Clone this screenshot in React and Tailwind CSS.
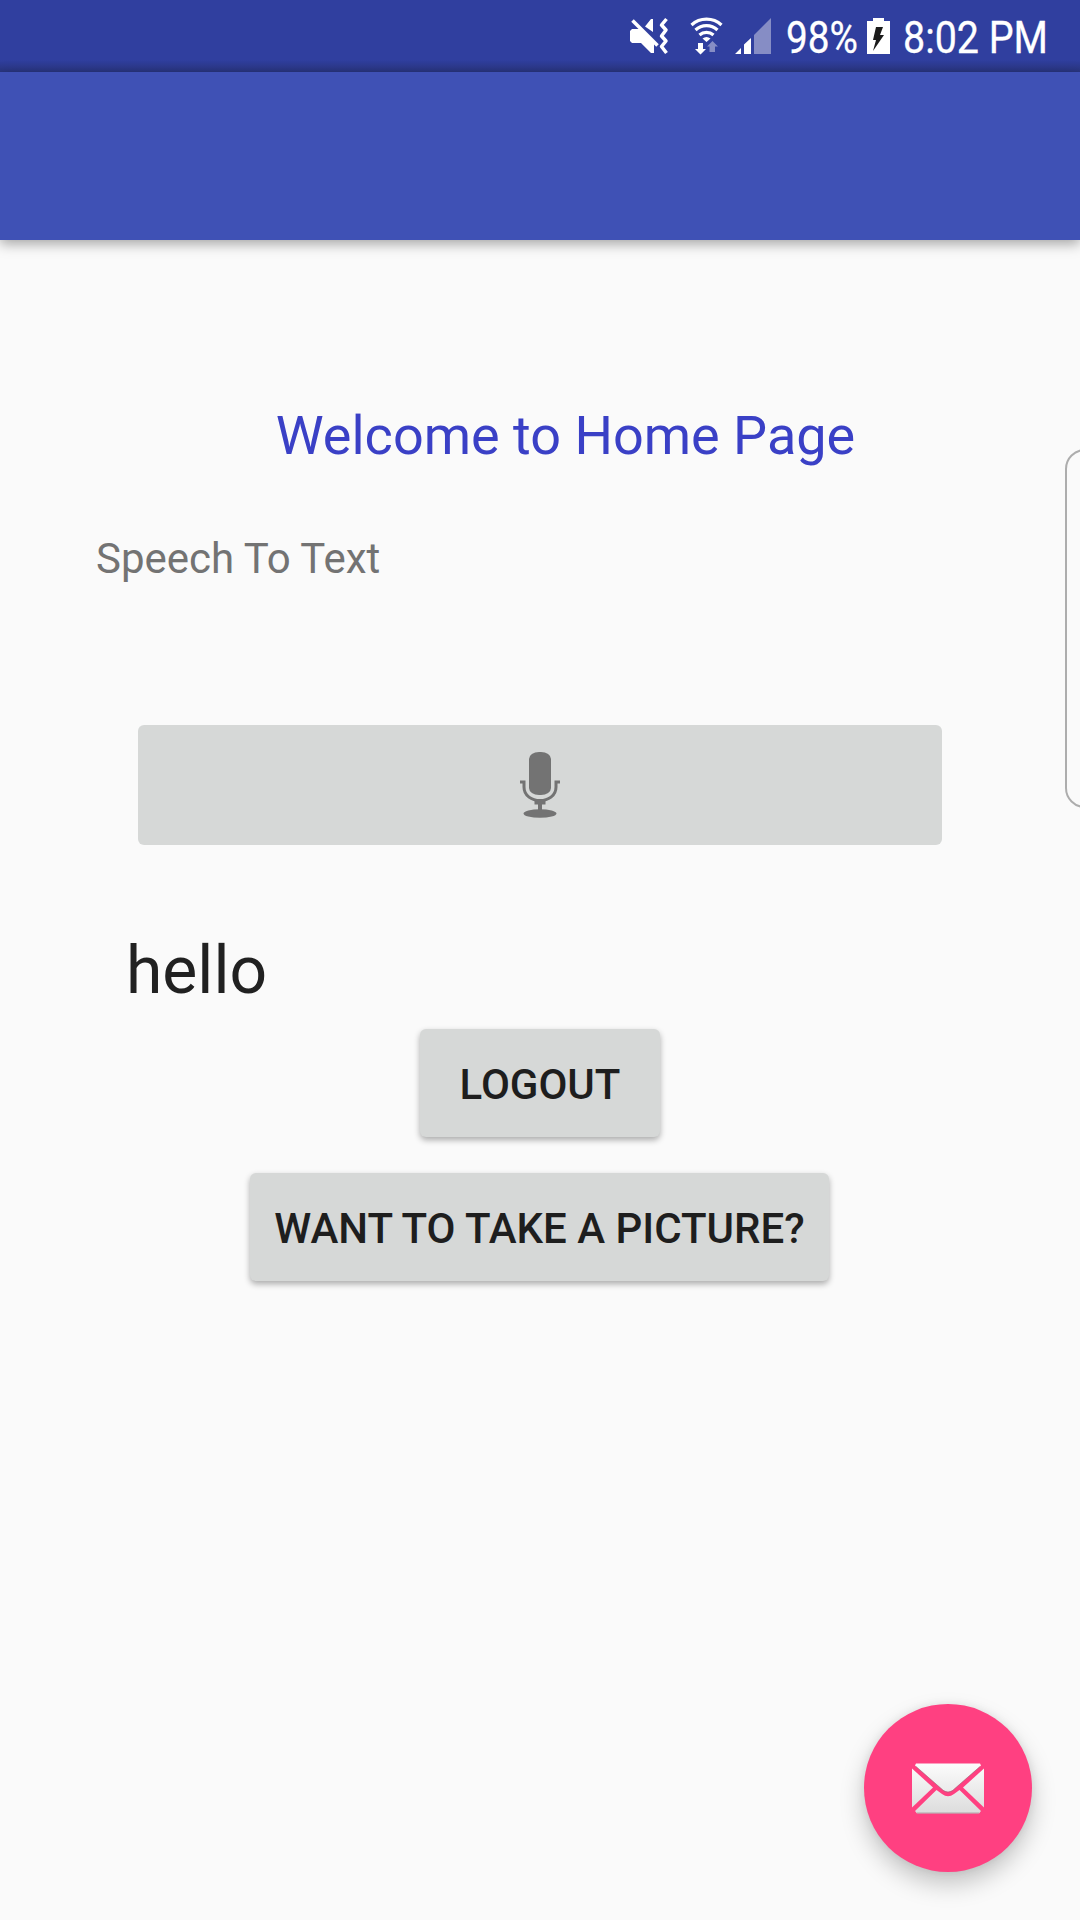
function StatusBar() {
  return (
    <div className="h-[72px] flex-none bg-[linear-gradient(to_bottom,#303f9f_0px,#303f9f_60px,#29357f_72px)]">
      <svg className="block h-[72px] w-full" viewBox="0 0 1080 72" fill="#fff">
        <path d="M632 29H640L654 43V53H651L641 43H632L630 41V31Z M645 26.500L651 19H653V32Z" />
        <path d="M632.500 20.500L657.500 45.500" stroke="#fff" strokeWidth="3.500" />
        <path d="M666.500 19L661.500 25L666 30L661.500 36L666 41L661.500 46.500L666.500 53" fill="none" stroke="#fff" strokeWidth="3.500" strokeLinejoin="round" />
        <g fill="none" stroke="#fff" strokeWidth="3.200">
          <path d="M691.500 25A22 22 0 0 1 721.500 25" />
          <path d="M695.500 30A16 16 0 0 1 717.500 30" />
          <path d="M699.500 35A10.500 10.500 0 0 1 713.500 35" />
        </g>
        <path d="M702.500 38.500Q706.500 35.500 710.500 38.500L706.500 42Z M698 43H703V49H706L700.500 54.500L695 49H698Z" />
        <path d="M709.500 52V46.500H707L712.500 41L718 46.500H715V52Z" fill="#868dc5" />
        <path d="M735 54L741 48V54Z M744 54V44.500L751 38V54Z" />
        <path d="M754 54V35L771 18V54Z" fill="#868dc5" />
        <path d="M867 21H873V18H884V21H890V54H867Z" />
        <path d="M876 27H883L880 35H884L873 51L876 40H873Z" fill="#1b1b1b" />
        <g fontFamily="Roboto" fontSize="45" stroke="#fff" strokeWidth="0.300">
          <text x="786" y="53" textLength="72" lengthAdjust="spacingAndGlyphs">98%</text>
          <text x="903" y="53" textLength="145" lengthAdjust="spacingAndGlyphs">8:02 PM</text>
        </g>
      </svg>
    </div>
  );
}

function MicIcon() {
  return (
    <svg className="h-[72px] w-[48px]" viewBox="0 0 48 72" fill="#737373">
      <rect x="13" y="3" width="22" height="43" rx="10" ry="7" />
      <path d="M4 33H8V38C8 56 40 56 40 38V33H44" fill="none" stroke="#737373" strokeWidth="3" />
      <path d="M18.500 51H29.500V55.500H26V61H22V55.500H18.500Z" />
      <ellipse cx="24" cy="64.500" rx="16.500" ry="4.300" />
    </svg>
  );
}

function MailIcon() {
  return (
    <svg className="h-[52px] w-[72px]" viewBox="0 0 72 52">
      <defs>
        <linearGradient id="paper" x1="0" y1="0" x2="0" y2="52" gradientUnits="userSpaceOnUse">
          <stop stopColor="#fdfdfd" />
          <stop offset="1" stopColor="#dcdcdc" />
        </linearGradient>
      </defs>
      <g fill="url(#paper)">
        <path d="M4 1.500H68L69 3.500L41 28Q36 31.500 31 28L3 3.500Z" />
        <path d="M0 6.500L21 25.500L0 45.500Z" />
        <path d="M72 6.500L51 25.500L72 45.500Z" />
        <path d="M24.500 28L30 32Q36 36.500 42 32L47.500 28L69 49L67 51.500H5L3 49Z" />
      </g>
      <path d="M5 51H67M4 4.500L32 29Q36 31.500 40 29L68 4.500" fill="none" stroke="#8a7078" strokeOpacity=".5" strokeWidth="1" />
    </svg>
  );
}

export default function App() {
  return (
    <div className="relative flex h-[1920px] w-[1080px] flex-col overflow-hidden bg-[#fafafa] font-[Roboto,sans-serif]">
      <StatusBar />
      <header className="h-[168px] flex-none bg-[#3f51b5] shadow-[0_4px_12px_rgba(0,0,0,0.34)]" />
      <main className="flex flex-col items-center">
        <h1 className="mt-[160px] ml-[51px] whitespace-nowrap text-[54px] leading-[72px] text-[#3a40c6]">Welcome to Home Page</h1>
        <p className="mt-[59px] ml-[96px] self-start text-[42px] leading-[56px] text-[#737373]">Speech To Text</p>
        <button className="mt-[138px] flex h-[120px] w-[804px] items-center justify-center rounded-[6px] bg-[#d6d8d7]" aria-label="Record speech">
          <MicIcon />
        </button>
        <p className="mt-[82px] ml-[126px] self-start text-[66px] leading-[88px] text-[#212121]">hello</p>
        <button className="mt-[14px] h-[108px] w-[240px] rounded-[6px] bg-[#d6d8d7] pt-[3px] text-[42px] font-medium text-[#1e1e1e] shadow-[0_3px_6px_rgba(0,0,0,0.32)]">LOGOUT</button>
        <button className="mt-[36px] mr-px h-[108px] w-[579px] whitespace-nowrap rounded-[6px] bg-[#d6d8d7] pt-[3px] text-[42px] font-medium text-[#1e1e1e] shadow-[0_3px_6px_rgba(0,0,0,0.32)]">WANT TO TAKE A PICTURE?</button>
      </main>
      <div className="absolute top-[449px] left-[1065px] h-[359px] w-[40px] rounded-[20px] border-2 border-[#adadad]" />
      <button className="absolute right-[48px] bottom-[48px] flex h-[168px] w-[168px] items-center justify-center rounded-full bg-[#ff4081] shadow-[0_12px_24px_rgba(0,0,0,0.22),0_0_8px_rgba(0,0,0,0.08)]" aria-label="Send mail">
        <MailIcon />
      </button>
    </div>
  );
}
